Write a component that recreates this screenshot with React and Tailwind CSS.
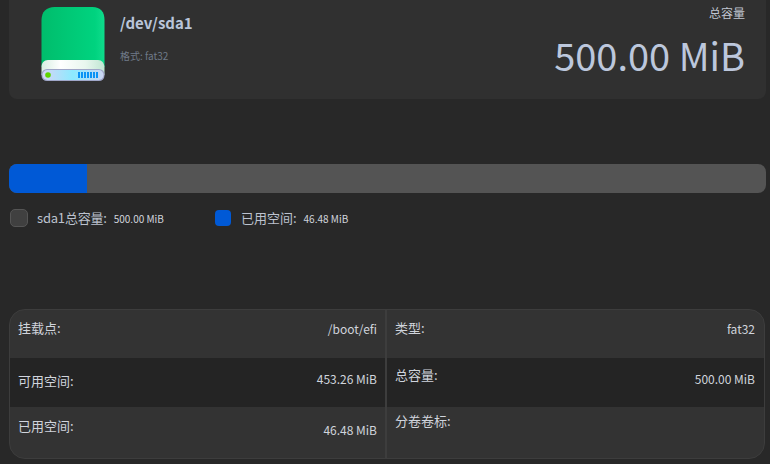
const font = "font-['Noto_Sans_CJK_SC','Noto_Sans',sans-serif]"

function DiskIcon() {
  return (
    <svg width="66" height="76" viewBox="0 0 66 76" fill="none">
      <defs>
        <linearGradient id="body" x1="0" y1="0" x2="1" y2="0">
          <stop offset="0" stopColor="#00bd6c" />
          <stop offset="0.85" stopColor="#00d37f" />
          <stop offset="1" stopColor="#0fdc8c" />
        </linearGradient>
        <linearGradient id="front" x1="0" y1="0" x2="1" y2="0">
          <stop offset="0" stopColor="#d8efe2" />
          <stop offset="0.3" stopColor="#ffffff" />
          <stop offset="0.7" stopColor="#e8f6ee" />
          <stop offset="1" stopColor="#bfe6d2" />
        </linearGradient>
        <linearGradient id="panel" x1="0" y1="0" x2="1" y2="0">
          <stop offset="0" stopColor="#d5d4f4" />
          <stop offset="0.5" stopColor="#8ceaff" />
          <stop offset="1" stopColor="#ccd6f2" />
        </linearGradient>
      </defs>
      <path d="M13 0H51C59 0 63 5 63 13V60H0V13C0 5 5 0 13 0Z" transform="translate(1.5 0)" fill="url(#body)" />
      <path d="M8 53H58C62 53 64 56 64.500 60V68H1.500V60C1.500 56 4 53 8 53Z" fill="url(#front)" />
      <rect x="1.500" y="62" width="63" height="12" rx="5.500" fill="#9fa6c8" />
      <rect x="2.500" y="63" width="61" height="10" rx="5" fill="url(#panel)" />
      <circle cx="8" cy="68" r="2.800" fill="#5fd400" />
      <g fill="#0a93f5">
        <rect x="38" y="65" width="2" height="6" />
        <rect x="41" y="65" width="2" height="6" />
        <rect x="44" y="65" width="2" height="6" />
        <rect x="47" y="65" width="2" height="6" />
        <rect x="50" y="65" width="2" height="6" />
        <rect x="53" y="65" width="2" height="6" />
        <rect x="56" y="65" width="2" height="6" />
      </g>
    </svg>
  )
}

function Cell({ label, value, labelTop, valueTop, shade }) {
  return (
    <div className={`flex justify-between px-2 leading-[18px] text-[#d0d4dc] ${shade}`}>
      <span className={`text-[13px] ${labelTop}`}>{label}</span>
      <span className={`text-[12px] ${valueTop}`}>{value}</span>
    </div>
  )
}

export default function App() {
  return (
    <div className={`${font} w-[770px] h-[464px] overflow-hidden bg-[#282828] pl-[9px] pr-1`}>
      <div className="flex h-[99px] rounded-b-lg bg-[#303030] pl-[31px] pr-[21px]">
        <div className="pt-[7px]"><DiskIcon /></div>
        <div className="ml-[14px] flex flex-col">
          <span className="mt-[12px] text-[15px] leading-[22px] font-bold text-[#b9c5da]">/dev/sda1</span>
          <span className="mt-[14px] text-[10px] leading-[15px] text-[#6f7a88]">格式: fat32</span>
        </div>
        <div className="ml-auto flex flex-col items-end">
          <span className="mt-[4px] text-[12px] leading-[18px] text-[#c0c6d0]">总容量</span>
          <span className="mt-[7px] text-[38px] leading-[52px] text-[#bcc7dc]">500.00 MiB</span>
        </div>
      </div>

      <div className="mt-[65px] h-[29px] overflow-hidden rounded-lg bg-[#545454]">
        <div className="h-full w-[78px] bg-[#0059d6]" />
      </div>

      <div className="mt-4 flex h-[18px] items-center pl-px">
        <span className="size-[18px] rounded-[5px] border border-[#555555] bg-[#404040]" />
        <span className="ml-[9px] text-[13px] tracking-[-0.2px] text-[#bcc2ce]">sda1总容量:</span>
        <span className="ml-[7px] text-[10px] text-[#d0d4dc]">500.00 MiB</span>
        <span className="ml-[51px] size-4 rounded bg-[#0059d6]" />
        <span className="ml-[10px] text-[13px] text-[#bcc2ce]">已用空间:</span>
        <span className="ml-[7px] text-[10px] text-[#d0d4dc]">46.48 MiB</span>
      </div>

      <div className="mt-[82px] grid h-[150px] w-[756px] grid-cols-[1fr_1fr] overflow-hidden rounded-2xl border border-[#3d3d3d] bg-[#333333]">
        <div className="border-r-2 border-[#3d3d3d]">
          <div className="h-[48px]"><Cell label="挂载点:" value="/boot/efi" labelTop="mt-[9px]" valueTop="mt-[10px]" shade="h-full" /></div>
          <div className="h-[49px]"><Cell label="可用空间:" value="453.26 MiB" labelTop="mt-[14px]" valueTop="mt-[12px]" shade="h-full bg-[#242424]" /></div>
          <div className="h-[51px]"><Cell label="已用空间:" value="46.48 MiB" labelTop="mt-[10px]" valueTop="mt-[14px]" shade="h-full" /></div>
        </div>
        <div>
          <div className="h-[48px]"><Cell label="类型:" value="fat32" labelTop="mt-[9px]" valueTop="mt-[10px]" shade="h-full pr-[9px]" /></div>
          <div className="h-[49px]"><Cell label="总容量:" value="500.00 MiB" labelTop="mt-[8px]" valueTop="mt-[12px]" shade="h-full pr-[9px] bg-[#242424]" /></div>
          <div className="h-[51px]"><Cell label="分卷卷标:" value="" labelTop="mt-[5px]" valueTop="mt-[14px]" shade="h-full pr-[9px]" /></div>
        </div>
      </div>
    </div>
  )
}
